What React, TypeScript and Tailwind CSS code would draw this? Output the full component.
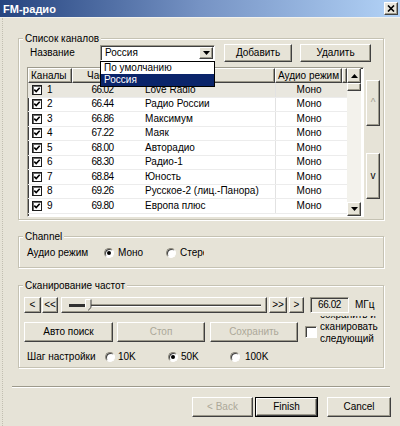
import React from "react";

const raised =
  "border border-t-white border-l-white border-r-[#404040] border-b-[#404040] shadow-[inset_-1px_-1px_0_#9d9a8c]";
const sunken =
  "border border-t-[#9d9a8c] border-l-[#9d9a8c] border-r-white border-b-white shadow-[inset_1px_1px_0_#404040]";

const channels = [
  ["1", "66.02", "Love Radio"],
  ["2", "66.44", "Радио России"],
  ["3", "66.86", "Максимум"],
  ["4", "67.22", "Маяк"],
  ["5", "68.00", "Авторадио"],
  ["6", "68.30", "Радио-1"],
  ["7", "68.84", "Юность"],
  ["8", "69.26", "Русское-2 (лиц.-Панора)"],
  ["9", "69.80", "Европа плюс"],
];

function Btn({
  children,
  className = "",
  disabled = false,
}: {
  children: React.ReactNode;
  className?: string;
  disabled?: boolean;
}) {
  return (
    <button
      className={`flex items-center justify-center bg-[#e6e3d7] ${raised} ${
        disabled ? "text-[#aca899]" : "text-black"
      } ${className}`}
    >
      {children}
    </button>
  );
}

function Group({
  title,
  className = "",
  children,
}: {
  title: string;
  className?: string;
  children: React.ReactNode;
}) {
  return (
    <div
      className={`relative border border-[#c5c2b3] shadow-[1px_1px_0_#fff,inset_1px_1px_0_#fff] ${className}`}
    >
      <span className="absolute left-[4px] top-[-7px] bg-[#e6e3d7] px-[2px] leading-[13px]">
        {title}
      </span>
      {children}
    </div>
  );
}

function Radio({ checked = false }: { checked?: boolean }) {
  return (
    <span className="flex items-center justify-center w-[10px] h-[10px] shrink-0 rounded-full bg-white border border-t-[#8a877a] border-l-[#8a877a] border-r-white border-b-white shadow-[inset_1px_1px_0_#404040]">
      {checked && <span className="w-[4px] h-[4px] rounded-full bg-black" />}
    </span>
  );
}

function Check() {
  return (
    <span className="flex items-center justify-center w-[10px] h-[10px] shrink-0 bg-white border border-[#1c1c1c] shadow-[inset_1px_1px_0_#6b6b6b]">
      <svg width="8" height="8" viewBox="0 0 8 8">
        <path d="M1.3 3.6 L3.2 5.5 L6.7 1.8" fill="none" stroke="#000" strokeWidth="1.6" />
      </svg>
    </span>
  );
}

function Tri({ down = true }: { down?: boolean }) {
  return (
    <svg width="7" height="4" viewBox="0 0 7 4">
      <path d={down ? "M0 0 H7 L3.5 4 Z" : "M0 4 H7 L3.5 0 Z"} fill="#000" />
    </svg>
  );
}

function TitleBar() {
  return (
    <div className="h-[17px] flex items-center justify-between pl-[3px] pr-[2px] bg-linear-to-r from-[#26447f] via-[#7693c4] to-[#b3d3f7] border-b border-[#f3f2ec] box-content">
      <span className="text-white font-bold text-[11px] leading-[14px]">FM-радио</span>
      <span className={`flex items-center justify-center w-[14px] h-[13px] bg-[#e8e6de] ${raised}`}>
        <svg width="8" height="7" viewBox="0 0 8 7">
          <path d="M1 0.5 L7 6.5 M7 0.5 L1 6.5" stroke="#000" strokeWidth="1.6" />
        </svg>
      </span>
    </div>
  );
}

function ChannelList() {
  return (
    <div className="flex mt-[5px]">
      <div className={`w-[337px] h-[149.5px] bg-white flex ${sunken}`}>
        <div className="w-[319px] flex flex-col">
          <div className="flex h-[15px] shrink-0 bg-[#e6e3d7]">
            <div className={`w-[44px] pl-[2px] flex items-center ${raised}`}>Каналы</div>
            <div className={`w-[61px] pl-[14px] flex items-center ${raised}`}>Частота</div>
            <div className={`w-[142px] pl-[6px] flex items-center ${raised}`}>Название</div>
            <div className={`w-[67px] flex items-center justify-center whitespace-nowrap ${raised}`}>Аудио режим</div>
            <div className={`w-[5px] ${raised}`} />
          </div>
          {channels.map(([n, f, name], i) => (
            <div
              key={n}
              className={`flex h-[14.5px] shrink-0 border-b border-[#ececec] ${
                i === 0 ? "bg-[#e9e7df]" : ""
              }`}
            >
              <div className="w-[44px] pl-[4px] flex items-center">
                <Check />
                <span className="ml-[5px]">{n}</span>
              </div>
              <div className="w-[61px] flex items-center justify-center tracking-[-0.6px]">{f}</div>
              <div className="w-[142px] pl-[12px] flex items-center whitespace-nowrap overflow-hidden">
                {name}
              </div>
              <div className="w-[67px] flex items-center justify-center border-l border-[#e2e2e2]">
                Моно
              </div>
            </div>
          ))}
        </div>
        <div className="w-[14px] flex flex-col bg-[#f3f2ec]">
          <div className={`h-[15px] flex items-center justify-center bg-[#e6e3d7] ${raised}`}>
            <Tri down={false} />
          </div>
          <div className={`h-[8px] bg-[#e6e3d7] ${raised}`} />
          <div className="flex-1" />
          <div className={`h-[14px] flex items-center justify-center bg-[#e6e3d7] ${raised}`}>
            <Tri />
          </div>
        </div>
      </div>
      <div className="ml-[2px] flex flex-col">
        <Btn className="mt-[13px] w-[14px] h-[46px] text-[#a19e90]!">^</Btn>
        <Btn className="mt-[27px] w-[14px] h-[46px]">v</Btn>
      </div>
    </div>
  );
}

export default function App() {
  return (
    <div className="w-[400px] h-[426px] overflow-hidden bg-[#e6e3d7] text-black text-[10px] leading-[12px] font-['Liberation_Sans',Arial,sans-serif] select-none">
      <TitleBar />
      <div className="ml-[2px] h-[408px] border-l border-dotted border-[#c2bfb1] flex flex-col">
        <Group title="Список каналов" className="ml-[15px] mt-[20px] w-[366px] h-[182px] pt-[5px] pl-[8px]">
          <div className="flex items-center h-[18px]">
            <span className="ml-[3px] w-[70px]">Название</span>
            <div className={`relative w-[115px] h-[16px] flex items-center bg-white ${sunken}`}>
              <span className="flex-1 pl-[4px]">Россия</span>
              <span className={`w-[14px] h-[12px] mr-[1px] flex items-center justify-center bg-[#e6e3d7] ${raised}`}>
                <Tri />
              </span>
              <div className="absolute left-[-1px] top-[15px] z-10 w-[115px] border border-black bg-white">
                <div className="h-[12px] pl-[3px] flex items-center">По умолчанию</div>
                <div className="h-[12px] pl-[3px] flex items-center bg-[#0a246a] text-white">Россия</div>
              </div>
            </div>
            <Btn className="ml-[9px] w-[68px] h-[18px]">Добавить</Btn>
            <Btn className="ml-[8px] w-[71px] h-[18px]">Удалить</Btn>
          </div>
          <ChannelList />
        </Group>

        <Group title="Channel" className="ml-[15px] mt-[16px] w-[366px] h-[32px] pt-[9px] pl-[8px]">
          <div className="flex items-center h-[14px]">
            <span className="w-[77px]">Аудио режим</span>
            <div className="w-[62px] flex items-center">
              <Radio checked />
              <span className="ml-[4px]">Моно</span>
            </div>
            <div className="w-[38px] flex items-center overflow-hidden whitespace-nowrap">
              <Radio />
              <span className="ml-[4px]">Стерео</span>
            </div>
          </div>
        </Group>

        <Group title="Сканирование частот" className="ml-[15px] mt-[17px] w-[366px] h-[83px] pt-[11px] pl-[5px]">
          <div className="flex items-center h-[16px]">
            <Btn className="w-[17px] h-[16px]">&lt;</Btn>
            <Btn className="ml-[1px] w-[16px] h-[16px]">&lt;&lt;</Btn>
            <div className={`relative ml-[3px] w-[206px] h-[16px] ${raised}`}>
              <div className="absolute left-[7px] top-[6px] w-[192px] h-[3px] border-t border-[#9d9a8c] border-b border-b-white bg-[#404040]" />
              <div className="absolute left-[7px] top-[6px] w-[17px] h-[3px] bg-[#303030]" />
              <svg className="absolute left-[23px] top-[1px]" width="7" height="12" viewBox="0 0 7 12">
                <path d="M0.5 0.5 H6 V8.5 L3.2 11.3 L0.5 8.5 Z" fill="#e6e3d7" />
                <path d="M0.5 8.5 V0.5 H6" fill="none" stroke="#fff" />
                <path d="M6 0.5 V8.5 L3.2 11.3" fill="none" stroke="#404040" />
              </svg>
            </div>
            <Btn className="ml-[2px] w-[18px] h-[16px]">&gt;&gt;</Btn>
            <Btn className="ml-[2px] w-[15px] h-[16px]">&gt;</Btn>
            <div className={`ml-[6px] w-[39px] h-[16px] flex items-center justify-center tracking-[-0.4px] ${sunken}`}>
              66.02
            </div>
            <span className="ml-[6px]">МГц</span>
          </div>

          <div className="flex items-start h-[20px] mt-[9px]">
            <Btn className="w-[89px] h-[20px]">Авто поиск</Btn>
            <Btn className="ml-[4px] w-[88px] h-[20px]" disabled>
              Стоп
            </Btn>
            <Btn className="ml-[5px] w-[88px] h-[20px]" disabled>
              Сохранить
            </Btn>
            <span className={`ml-[7px] mt-[4px] w-[12px] h-[12px] shrink-0 bg-white ${sunken}`} />
            <div className="ml-[3px] -mt-[6px] h-[32px] overflow-hidden whitespace-nowrap">
              <div className="-mt-[7px] leading-[12px]">
                <div>сохранить и</div>
                <div>сканировать</div>
                <div>следующий</div>
              </div>
            </div>
          </div>

          <div className="flex items-center h-[14px] mt-[8px] pl-[3px]">
            <span className="w-[78px]">Шаг настройки</span>
            <div className="w-[63px] flex items-center">
              <Radio />
              <span className="ml-[3px]">10K</span>
            </div>
            <div className="w-[62px] flex items-center">
              <Radio checked />
              <span className="ml-[3px]">50K</span>
            </div>
            <div className="flex items-center">
              <Radio />
              <span className="ml-[5px]">100K</span>
            </div>
          </div>
        </Group>

        <div className="ml-[9px] mt-[18px] w-[378px] h-[2px] border-t border-[#9d9a8c] border-b border-b-white" />

        <div className="flex justify-end pr-[9px] mt-[9px]">
          <Btn className="w-[61px] h-[20px]" disabled>
            &lt; Back
          </Btn>
          <button className="ml-[2px] w-[63px] h-[20px] border border-black p-0">
            <span className={`flex items-center justify-center w-full h-full bg-[#e6e3d7] ${raised}`}>Finish</span>
          </button>
          <Btn className="ml-[9px] w-[64px] h-[20px]">Cancel</Btn>
        </div>
      </div>
    </div>
  );
}
